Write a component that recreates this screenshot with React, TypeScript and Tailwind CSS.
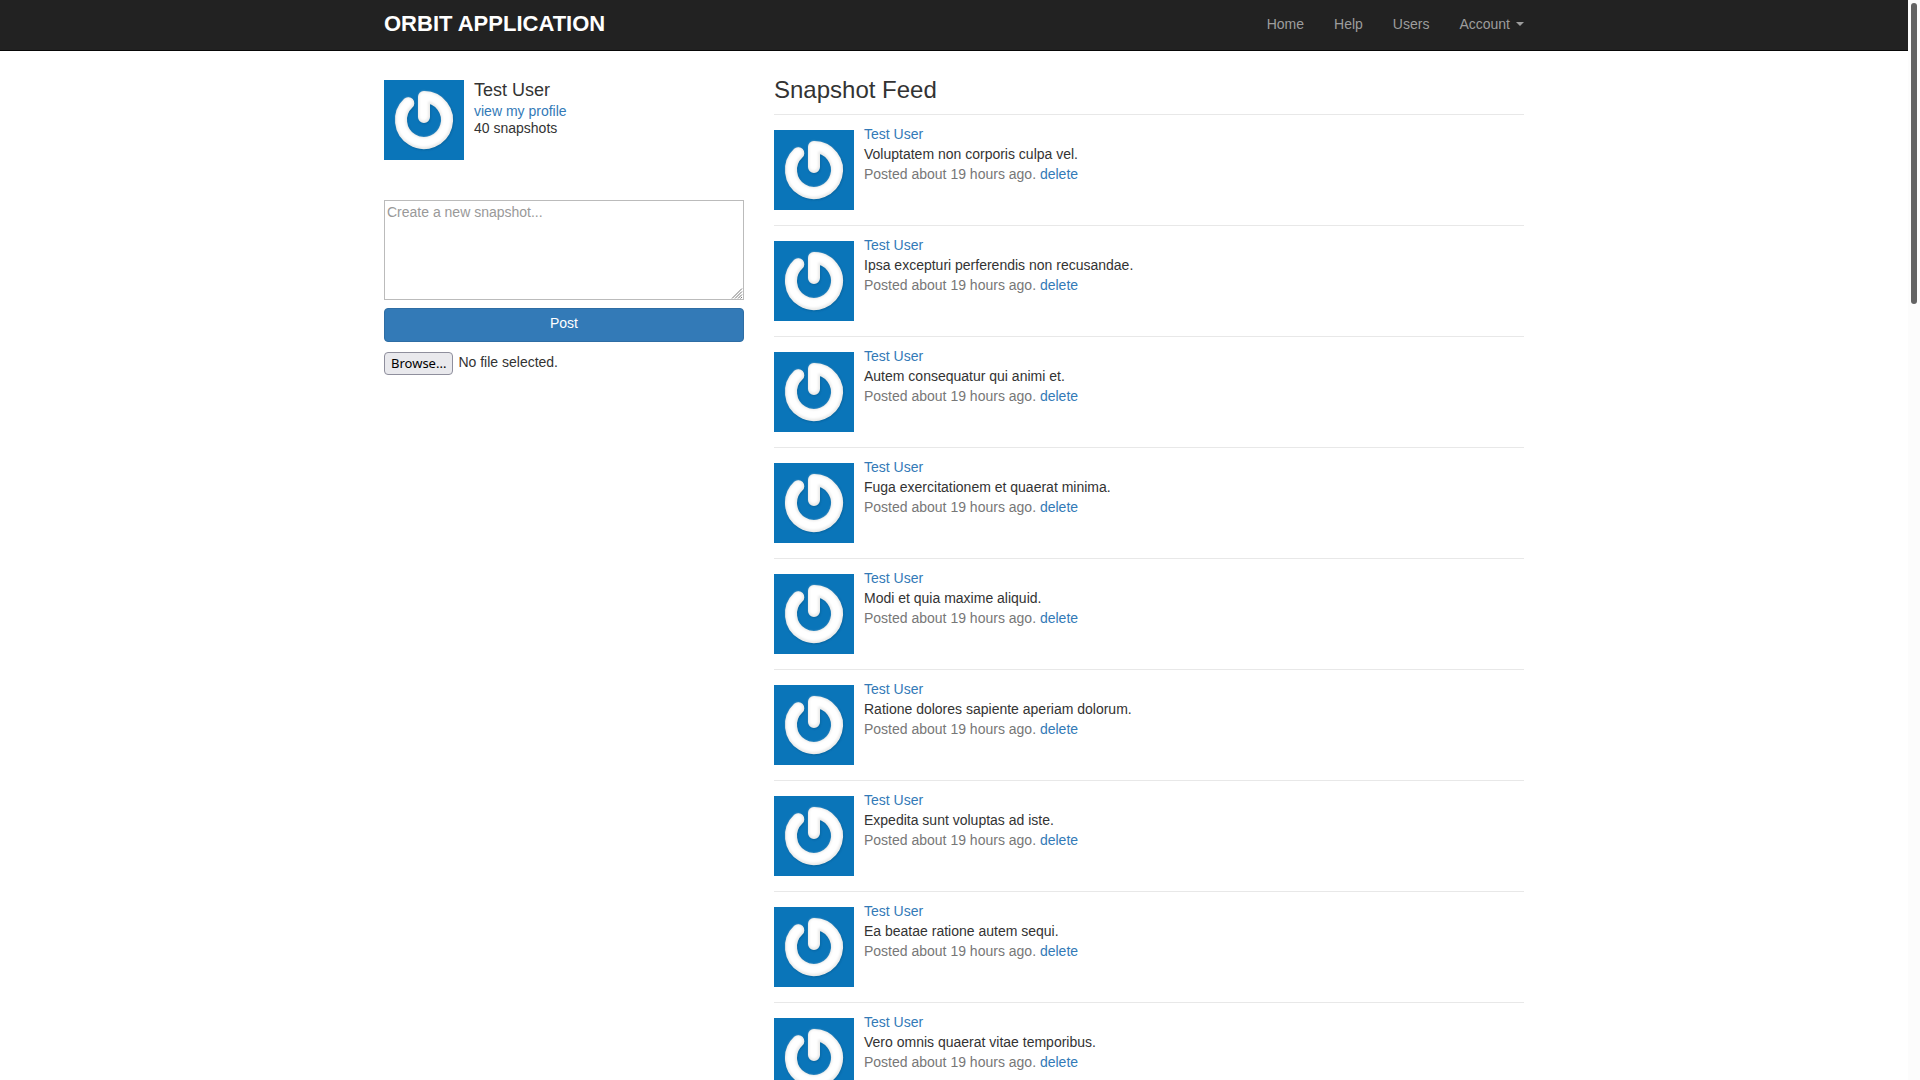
import React from "react";

const posts = [
  "Voluptatem non corporis culpa vel.",
  "Ipsa excepturi perferendis non recusandae.",
  "Autem consequatur qui animi et.",
  "Fuga exercitationem et quaerat minima.",
  "Modi et quia maxime aliquid.",
  "Ratione dolores sapiente aperiam dolorum.",
  "Expedita sunt voluptas ad iste.",
  "Ea beatae ratione autem sequi.",
  "Vero omnis quaerat vitae temporibus.",
];

const POWER = "M40 37V17A23 23 0 1 1 24.3 23.2";

function Avatar() {
  const id = React.useId();
  return (
    <svg viewBox="0 0 80 80" role="img" aria-label="Test User" className="size-20 shrink-0">
      <defs>
        <filter id={id + "s"} x="-20%" y="-20%" width="140%" height="140%">
          <feGaussianBlur stdDeviation="1" />
        </filter>
        <filter id={id + "h"} x="-20%" y="-20%" width="140%" height="140%">
          <feGaussianBlur stdDeviation="1.2" />
        </filter>
      </defs>
      <rect width="80" height="80" fill="#0a75b9" />
      <g fill="none" strokeLinecap="round" strokeLinejoin="round">
        <path d={POWER} transform="translate(.5 .8)" stroke="#064f80" strokeOpacity=".5" strokeWidth="12" filter={`url(#${id}s)`} />
        <path d={POWER} stroke="#e9e9e8" strokeWidth="12" />
        <path d={POWER} transform="translate(-.3 -.7)" stroke="#ffffff" strokeWidth="9" filter={`url(#${id}h)`} />
      </g>
    </svg>
  );
}

function NavLink({ children }: { children: React.ReactNode }) {
  return (
    <a href="#" className="flex items-center px-[15px] text-[#9d9d9d] hover:text-white">
      {children}
    </a>
  );
}

function Header() {
  return (
    <header className="h-[51px] border-b border-[#080808] bg-[#222]">
      <div className="mx-auto flex max-w-[1170px] justify-between px-[15px]">
        <a href="#" className="pt-2 text-[22px] leading-8 font-bold text-white">ORBIT APPLICATION</a>
        <nav className="-mr-[15px] flex h-12">
          <NavLink>Home</NavLink>
          <NavLink>Help</NavLink>
          <NavLink>Users</NavLink>
          <NavLink>
            Account
            <span className="ml-[6px] border-x-4 border-t-4 border-x-transparent border-t-[#9d9d9d]" />
          </NavLink>
        </nav>
      </div>
    </header>
  );
}

function Sidebar() {
  return (
    <aside className="pt-[29px]">
      <section className="flex gap-[10px]">
        <Avatar />
        <div>
          <h1 className="text-lg leading-5">Test User</h1>
          <a href="#" className="block pt-[3px] leading-[17px] text-[#337ab7]">view my profile</a>
          <span className="block leading-[17px]">40 snapshots</span>
        </div>
      </section>
      <form className="mt-10" onSubmit={(e) => e.preventDefault()}>
        <div className="relative">
          <textarea
            aria-label="Create a new snapshot"
            placeholder="Create a new snapshot..."
            className="block h-[100px] w-full border border-[#bbb] px-[2px] py-px leading-5 placeholder:text-[#999]"
          />
          <svg aria-hidden="true" viewBox="0 0 12 12" className="pointer-events-none absolute right-px bottom-px size-3">
            <rect width="12" height="12" fill="#fff" />
            <path d="M1 11.5L11 1.5M4 11.5L11 4.5M7 11.5L11 7.5M9.5 11.5L11 10" fill="none" stroke="#777" />
          </svg>
        </div>
        <button type="submit" className="mt-2 block h-[34px] w-full rounded border border-[#2e6da4] bg-[#337ab7] pb-1 text-white">
          Post
        </button>
        <label className="mt-[10px] flex w-fit items-start gap-[5px]">
          <input type="file" className="sr-only" />
          <span className="h-[23px] rounded border border-[#8f8f9d] bg-[#e9e9ed] px-[6px] font-['Noto_Sans',sans-serif] text-[13px] leading-5 text-black">
            Browse...
          </span>
          <span>No file selected.</span>
        </label>
      </form>
    </aside>
  );
}

function Feed() {
  return (
    <main className="pt-[25px]">
      <h3 className="mb-[10px] text-2xl leading-7">Snapshot Feed</h3>
      <ol>
        {posts.map((text) => (
          <li key={text} className="flex gap-[10px] border-t border-[#e8e8e8] pt-[15px] pb-[15px]">
            <Avatar />
            <div className="-mt-[6px]">
              <a href="#" className="block text-[#337ab7]">Test User</a>
              <p>{text}</p>
              <p className="text-[#777]">
                Posted about 19 hours ago. <a href="#" className="text-[#337ab7]">delete</a>
              </p>
            </div>
          </li>
        ))}
      </ol>
    </main>
  );
}

export default function App() {
  return (
    <div className="flex h-screen overflow-hidden bg-white font-['Liberation_Sans',Arial,sans-serif] text-sm leading-5 text-[#333]">
      <div className="min-w-0 flex-1 overflow-hidden">
        <Header />
        <div className="mx-auto grid max-w-[1170px] grid-cols-[minmax(0,1fr)_minmax(0,2fr)] px-[15px]">
          <div className="pr-5">
            <Sidebar />
          </div>
          <div className="pl-[10px]">
            <Feed />
          </div>
        </div>
      </div>
      <div aria-hidden="true" className="w-3 bg-[#fcfcfc] px-[3px] py-[3px]">
        <div className="h-[28%] rounded-full bg-[#636363]" />
      </div>
    </div>
  );
}
